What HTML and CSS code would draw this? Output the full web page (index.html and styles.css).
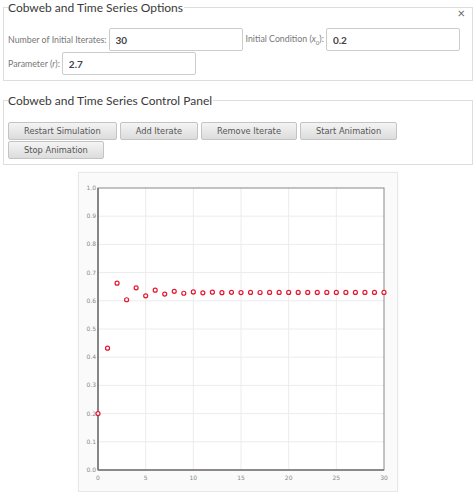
FILE: index.html
```html
<!DOCTYPE html>
<html>
  <head>
    <meta charset="utf-8">
    <title>Cobweb and Time Series</title>
    <link rel="stylesheet" href="styles.css">
  </head>
  <body>
    <fieldset class="options">
      <legend>Cobweb and Time Series Options</legend>
      <span class="close">&times;</span>
      <div class="row">
        <label for="iterates">Number of Initial Iterates:</label>
        <input id="iterates" class="field" type="text" value="30">
        <label for="initial" class="second">Initial Condition (<i>x</i><sub>0</sub>):</label>
        <input id="initial" class="field" type="text" value="0.2">
      </div>
      <div class="row">
        <label for="param">Parameter (<i>r</i>):</label>
        <input id="param" class="field" type="text" value="2.7">
      </div>
    </fieldset>

    <fieldset class="controls">
      <legend>Cobweb and Time Series Control Panel</legend>
      <div class="buttons">
        <button type="button">Restart Simulation</button>
        <button type="button">Add Iterate</button>
        <button type="button">Remove Iterate</button>
        <button type="button">Start Animation</button>
        <button type="button">Stop Animation</button>
      </div>
    </fieldset>

    <div class="chart">
      <svg id="plot" width="318" height="318" viewBox="0 0 318 318"></svg>
    </div>

    <script src="script.js"></script>
  </body>
</html>
```

FILE: styles.css
```css
body {
  margin: 0 1px 0 3px;
  font-family: Lato, "Open Sans", sans-serif;
  color: #555;
}

fieldset {
  position: relative;
  margin: 0;
  padding: 13px 4px 4px 4px;
  border: 1px solid #ddd;
  min-width: 0;
}

legend {
  padding: 0 1px 0 0;
  font-size: 12px;
  line-height: 15px;
  color: #3a3a3a;
}

.close {
  position: absolute;
  top: -8px;
  right: 7px;
  font-size: 13px;
  line-height: 12px;
  color: #666;
}

.row {
  display: flex;
  align-items: center;
  height: 23px;
  margin-bottom: 1px;
  font-size: 8.8px;
}

.row label {
  color: #777;
  margin-right: 2px;
}

.row label.second {
  margin-left: 3px;
}

.row sub {
  font-size: 6px;
}

.field {
  box-sizing: border-box;
  width: 134px;
  height: 23px;
  padding: 0 6px;
  border: 1px solid #ccc;
  border-radius: 2px;
  font-family: Lato, sans-serif;
  font-size: 10px;
  font-weight: bold;
  color: #444;
}

.controls {
  margin-top: 12px;
  padding: 14px 4px 5px 4px;
}

.buttons {
  display: flex;
  flex-wrap: wrap;
  gap: 1px 3px;
  width: 400px;
}

.buttons button {
  height: 18px;
  padding: 0 15px;
  border: 1px solid #c4c4c4;
  border-radius: 2px;
  background: linear-gradient(#f4f4f4, #dcdcdc);
  font-family: "DejaVu Sans", sans-serif;
  font-size: 8.3px;
  color: #555;
}

.chart {
  width: 318px;
  height: 318px;
  margin: 7px auto 0;
  border: 1px solid #e8e8e8;
  background: #fafafa;
  box-shadow: 0 0 2px rgba(0, 0, 0, 0.06);
}

.chart svg {
  display: block;
}

.tick {
  font-family: "DejaVu Sans", sans-serif;
  font-size: 6px;
  fill: #888;
}
```

FILE: script.js
```javascript
// logistic map time series, r = 2.7, x0 = 0.2, 30 iterates
(function () {
  const r = 2.7;
  const x0 = 0.2;
  const iterates = 30;

  const plotLeft = 19, plotRight = 305, plotTop = 15, plotBottom = 297;
  const ns = 'http://www.w3.org/2000/svg';
  const svg = document.getElementById('plot');

  function px(n) { return plotLeft + n * (plotRight - plotLeft) / iterates; }
  function py(v) { return plotBottom - v * (plotBottom - plotTop); }

  function add(tag, attrs, text) {
    const el = document.createElementNS(ns, tag);
    for (const k in attrs) el.setAttribute(k, attrs[k]);
    if (text !== undefined) el.textContent = text;
    svg.appendChild(el);
    return el;
  }

  add('rect', {x: plotLeft, y: plotTop, width: plotRight - plotLeft, height: plotBottom - plotTop, fill: '#fff'});

  // grid lines
  for (let i = 1; i < 10; i++) {
    add('line', {x1: plotLeft, x2: plotRight, y1: py(i / 10), y2: py(i / 10), stroke: '#ececec', 'stroke-width': 1});
  }
  for (let n = 5; n < 30; n += 5) {
    add('line', {x1: px(n), x2: px(n), y1: plotTop, y2: plotBottom, stroke: '#ececec', 'stroke-width': 1});
  }

  // frame
  add('rect', {x: plotLeft, y: plotTop, width: plotRight - plotLeft, height: plotBottom - plotTop, fill: 'none', stroke: '#888', 'stroke-width': 1});
  add('line', {x1: plotLeft, x2: plotLeft, y1: plotTop, y2: plotBottom, stroke: '#777', 'stroke-width': 1.6});
  add('line', {x1: plotLeft, x2: plotRight, y1: plotBottom, y2: plotBottom, stroke: '#777', 'stroke-width': 1.6});

  // tick labels
  for (let i = 0; i <= 10; i++) {
    add('text', {x: plotLeft - 2, y: py(i / 10) + 2, 'text-anchor': 'end', class: 'tick'}, (i / 10).toFixed(1));
  }
  for (let n = 0; n <= 30; n += 5) {
    add('text', {x: px(n), y: plotBottom + 10, 'text-anchor': 'middle', class: 'tick'}, n);
  }

  // points
  let x = x0;
  for (let n = 0; n <= iterates; n++) {
    add('circle', {cx: px(n), cy: py(x), r: 2, fill: '#fff', stroke: '#e3172f', 'stroke-width': 1.2});
    x = r * x * (1 - x);
  }
})();
```
